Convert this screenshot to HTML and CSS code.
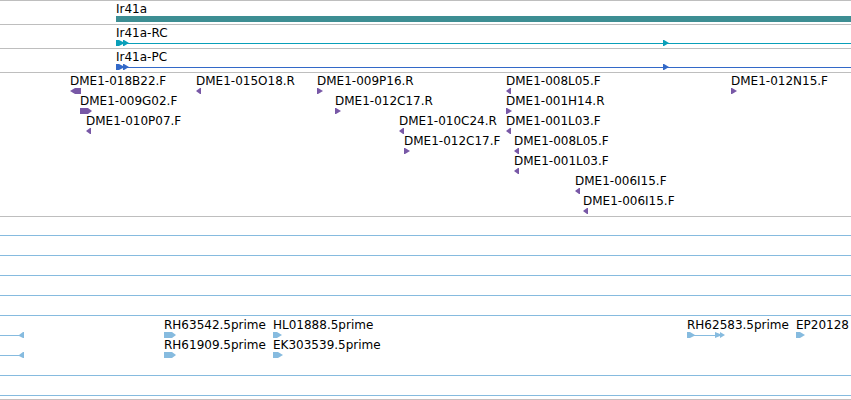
FILE: index.html
```
<!DOCTYPE html>
<html lang="en">
<head>
  <meta charset="UTF-8">
  <meta name="viewport" content="width=device-width, initial-scale=1.0">
  <title>Ir41a</title>
  <link rel="stylesheet" href="styles.css">
</head>
<body>
  <main id="tracks"></main>
  <script src="tracks.js"></script>
</body>
</html>
```
FILE: styles.css
```
body {
  margin: 0;
  background: #fff;
  color: #000;
  font-family: "DejaVu Sans", sans-serif;
  font-size: 12px;
  line-height: 16px;
}
main {
  overflow: hidden;
}
.track {
  border-top: 1px solid #bebebe;
}
.row {
  position: relative;
  height: 20px;
}
.gene .row {
  height: 23px;
}
.clones {
  padding-bottom: 3px;
}
.spacer {
  height: 18px;
}
.est {
  border-top-color: #86bbdf;
}
.reads {
  padding: 1px 0 18px;
}
.empty {
  height: 19px;
}
.thin {
  height: 3px;
}
.end {
  border-top-color: #c8bebe;
}

/* features sit at their place on the sequence */
.feature {
  position: absolute;
  top: 0;
  left: 0;
  white-space: nowrap;
}
.feature span {
  display: block;
  height: 15px;
}
.feature svg {
  display: block;
  height: 6px;
  overflow: visible;
}
.long {
  right: 0;
}
.long svg {
  width: 100%;
}
.bar svg {
  background: #3d8e93;
}
.purple { fill: #7858a6; }
.teal { fill: #099fb9; }
.blue { fill: #3369c8; }
.sky { fill: #86bbdf; }
```
FILE: tracks.js
```
// each feature: [x, label, shape]
const shapes = {
  right: 'M0 0H1L6 3L1 6H0Z',
  left: 'M5 0H4L0 3L4 6H5Z',
  boxLeft: 'M11 0H5L0 3L5 6H11Z',
  boxRight: 'M0 0H8L12 3L8 6H0Z',
  shortRight: 'M0 0H4L9 3L4 6H0Z',
  midRight: 'M0 0H5L10 3L5 6H0Z',
  exons: 'M0 0H3L7 2V0H8L13 3L8 6H7V4L3 6H0Z',
  pair: 'M0 0H3L8 3H28V0L33 2V0L38 3L33 6V4L28 6V4H7L3 6H0Z',
  joined: 'M24 0H23L19 3H0V4H19L23 6H24Z'
};

const tracks = [
  { type: 'gene', rows: [[[116, 'Ir41a', 'bar']]] },
  { type: 'gene', color: 'teal', rows: [[[116, 'Ir41a-RC', 'transcript']]] },
  { type: 'gene', color: 'blue', rows: [[[116, 'Ir41a-PC', 'transcript']]] },
  { type: 'clones', color: 'purple', rows: [
    [[70, 'DME1-018B22.F', 'boxLeft'], [196, 'DME1-015O18.R', 'left'], [317, 'DME1-009P16.R', 'right'],
     [506, 'DME1-008L05.F', 'left'], [731, 'DME1-012N15.F', 'right']],
    [[80, 'DME1-009G02.F', 'boxRight'], [335, 'DME1-012C17.R', 'right'], [506, 'DME1-001H14.R', 'right']],
    [[86, 'DME1-010P07.F', 'left'], [399, 'DME1-010C24.R', 'left'], [506, 'DME1-001L03.F', 'left']],
    [[404, 'DME1-012C17.F', 'right'], [514, 'DME1-008L05.F', 'left']],
    [[514, 'DME1-001L03.F', 'left']],
    [[575, 'DME1-006I15.F', 'left']],
    [[583, 'DME1-006I15.F', 'left']]
  ] },
  { type: 'spacer', rows: [] },
  { type: 'est empty', rows: [] },
  { type: 'est empty', rows: [] },
  { type: 'est empty', rows: [] },
  { type: 'est empty', rows: [] },
  { type: 'est reads', color: 'sky', rows: [
    [[0, '', 'joined'], [164, 'RH63542.5prime', 'boxRight'], [273, 'HL01888.5prime', 'shortRight'],
     [687, 'RH62583.5prime', 'pair'], [796, 'EP20128', 'shortRight']],
    [[0, '', 'joined'], [164, 'RH61909.5prime', 'boxRight'], [273, 'EK303539.5prime', 'midRight']]
  ] },
  { type: 'est empty', rows: [] },
  { type: 'est thin', rows: [] },
  { type: 'end', rows: [] }
];

function drawShape(shape, color) {
  if (shape === 'bar') {
    return '<svg></svg>';
  }
  if (shape === 'transcript') {
    return `<svg class="${color}"><rect x="8" y="3" width="100%" height="1"/>` +
      `<path d="${shapes.exons}"/><path d="M547 0H548L553 3L548 6H547Z"/></svg>`;
  }
  return `<svg class="${color}" width="40"><path d="${shapes[shape]}"/></svg>`;
}

function drawFeature([x, label, shape], color) {
  const long = shape === 'bar' || shape === 'transcript' ? ` long ${shape}` : '';
  return `<div class="feature${long}" style="left: ${x}px"><span>${label}</span>${drawShape(shape, color)}</div>`;
}

document.getElementById('tracks').innerHTML = tracks.map(track =>
  `<section class="track ${track.type}">` +
  track.rows.map(row => `<div class="row">${row.map(f => drawFeature(f, track.color)).join('')}</div>`).join('') +
  '</section>'
).join('');
```
